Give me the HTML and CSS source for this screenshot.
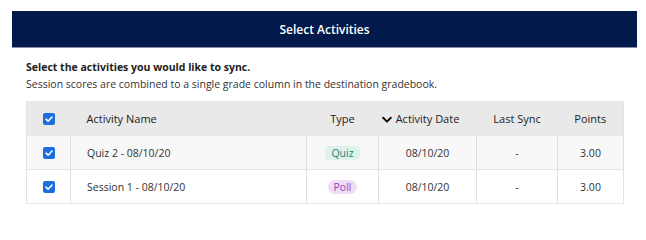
FILE: index.html
```html
<!DOCTYPE html>
<html>
<head>
<meta charset="utf-8">
<link rel="stylesheet" href="styles.css">
</head>
<body>
<div class="modal">
  <div class="modal-header">Select Activities</div>
  <div class="intro">
    <p class="intro-title">Select the activities you would like to sync.</p>
    <p class="intro-text">Session scores are combined to a single grade column in the destination gradebook.</p>
  </div>
  <table class="activities">
    <colgroup>
      <col class="c-check"><col class="c-name"><col class="c-type"><col class="c-date"><col class="c-sync"><col class="c-points">
    </colgroup>
    <thead>
      <tr>
        <th class="cell-check"><svg class="checkbox" viewBox="0 0 12 12"><rect width="12" height="12" rx="2"/><path d="M3 6.2 L5.1 8.2 L9 4"/></svg></th>
        <th class="cell-name">Activity Name</th>
        <th>Type</th>
        <th><span class="sort"><svg class="chev" viewBox="0 0 10 8"><path d="M1.2 1.8 L5 5.6 L8.8 1.8"/></svg></span>Activity Date</th>
        <th>Last Sync</th>
        <th>Points</th>
      </tr>
    </thead>
    <tbody>
      <tr class="row-alt">
        <td class="cell-check"><svg class="checkbox" viewBox="0 0 12 12"><rect width="12" height="12" rx="2"/><path d="M3 6.2 L5.1 8.2 L9 4"/></svg></td>
        <td class="cell-name">Quiz 2 - 08/10/20</td>
        <td><span class="pill pill-quiz">Quiz</span></td>
        <td>08/10/20</td>
        <td>-</td>
        <td>3.00</td>
      </tr>
      <tr>
        <td class="cell-check"><svg class="checkbox" viewBox="0 0 12 12"><rect width="12" height="12" rx="2"/><path d="M3 6.2 L5.1 8.2 L9 4"/></svg></td>
        <td class="cell-name">Session 1 - 08/10/20</td>
        <td><span class="pill pill-poll">Poll</span></td>
        <td>08/10/20</td>
        <td>-</td>
        <td>3.00</td>
      </tr>
    </tbody>
  </table>
</div>
</body>
</html>
```
FILE: styles.css
```css
html, body {
  margin: 0;
  padding: 0;
  background: #ffffff;
}
body {
  font-family: "Open Sans", "Noto Sans", sans-serif;
  color: #333333;
}
.modal {
  padding-top: 11px;
}
.modal-header {
  margin-left: 12px;
  width: 625px;
  height: 36px;
  background: #021a4b;
  border-bottom: 1px solid #8c8aa6;
  color: #ffffff;
  font-size: 12px;
  font-weight: 600;
  display: flex;
  align-items: center;
  justify-content: center;
}
.intro {
  padding: 11px 0 0 26px;
}
.intro p {
  margin: 0;
  font-size: 10.5px;
  line-height: 17px;
}
.intro-title {
  font-weight: 700;
  color: #222222;
}
.intro-text {
  color: #333333;
}
.activities {
  margin: 8px 0 0 26px;
  width: 597px;
  border-collapse: collapse;
  table-layout: fixed;
  font-size: 10.5px;
  border: 1px solid #e2e2e2;
  border-top: none;
}
.c-check { width: 44px; }
.c-name { width: 236px; }
.c-type { width: 72px; }
.c-date { width: 98px; }
.c-sync { width: 81px; }
.c-points { width: 66px; }
.activities th {
  height: 35px;
  background: #e9e9e9;
  font-weight: 400;
  font-size: 11px;
  color: #222222;
  text-align: center;
  padding: 0;
}
.activities td {
  height: 33px;
  text-align: center;
  padding: 0;
  border-left: 1px solid #e0e0e0;
  border-bottom: 1px solid #e6e6e6;
}
.activities td.cell-check {
  border-left: none;
}
.activities .cell-name {
  text-align: left;
  padding-left: 16px;
}
.row-alt td {
  background: #f8f8f8;
}
.checkbox {
  width: 12px;
  height: 12px;
  display: block;
  margin: 0 auto;
}
.checkbox rect {
  fill: #1b6fdc;
}
.checkbox path {
  fill: none;
  stroke: #ffffff;
  stroke-width: 1.6;
  stroke-linecap: round;
  stroke-linejoin: round;
}
.sort {
  display: inline-block;
  margin-left: -14px;
  width: 14px;
  vertical-align: middle;
}
.chev {
  width: 10px;
  height: 8px;
  display: block;
}
.chev path {
  fill: none;
  stroke: #111111;
  stroke-width: 2;
  stroke-linecap: round;
  stroke-linejoin: round;
}
.pill {
  display: inline-block;
  padding: 0 6px;
  line-height: 14px;
  font-size: 10.5px;
}
.pill-quiz {
  background: #def2ec;
  color: #2f7f74;
  border-radius: 4px;
}
.pill-poll {
  background: #efdff6;
  color: #9a3db8;
  border-radius: 8px;
}
```
